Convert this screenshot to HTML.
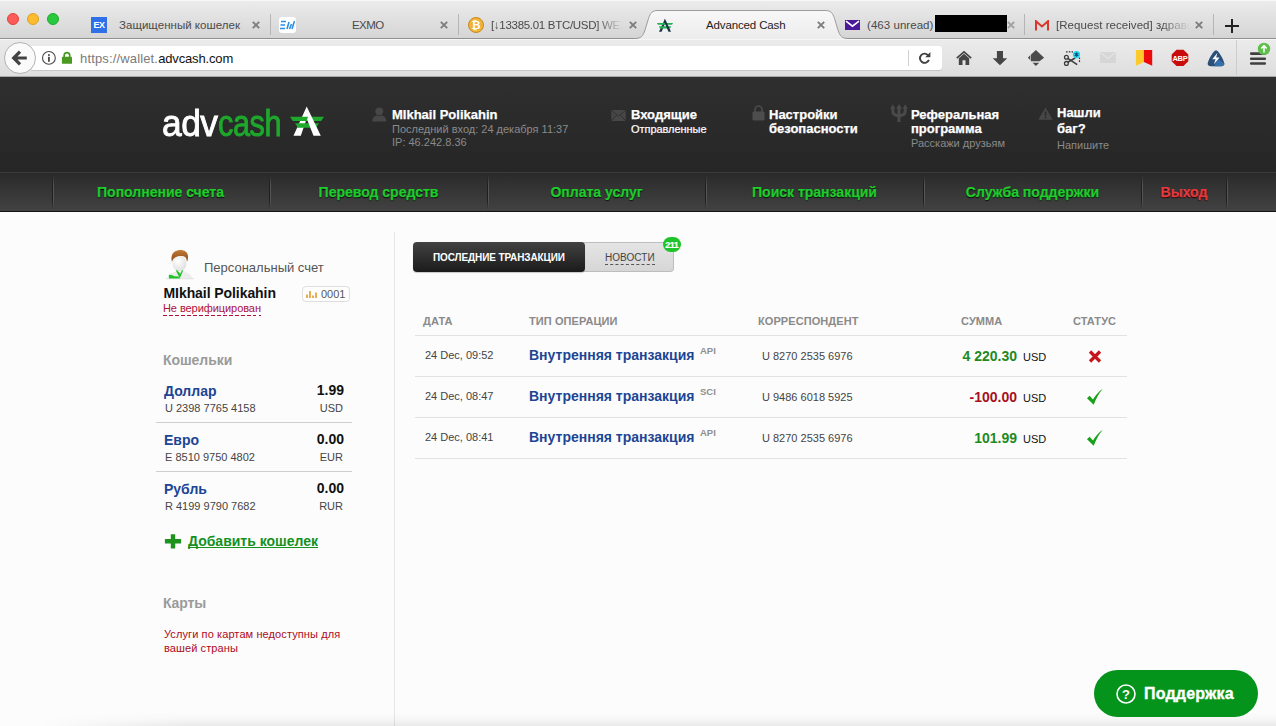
<!DOCTYPE html>
<html lang="ru">
<head>
<meta charset="utf-8">
<title>Advanced Cash</title>
<style>
*{box-sizing:border-box;margin:0;padding:0}
html,body{width:1276px;height:726px;overflow:hidden;background:#fcfcfc;font-family:"Liberation Sans",sans-serif;}
.a{position:absolute;white-space:nowrap}
#chrome{position:absolute;left:0;top:0;width:1276px;height:77px;background:#f1f1f1}
#tabbar{position:absolute;left:0;top:0;width:1276px;height:38px;background:linear-gradient(#f9f9f9 0,#f9f9f9 1px,#ebebeb 1.500px,#d5d5d5)}
#urlbar{position:absolute;left:0;top:39px;width:1276px;height:38px;background:linear-gradient(#ebebeb,#dedede);border-top:1px solid #f6f6f6;border-bottom:1px solid #a8a8a8}
.tl{position:absolute;top:13px;width:12px;height:12px;border-radius:6px}
.tab{position:absolute;top:0;height:38px;font-size:11.500px;white-space:nowrap;color:#4a4a4a;line-height:38px}
.tabx{position:absolute;top:0;font-size:11px;color:#808080;line-height:38px;font-weight:bold}
.sep{position:absolute;top:9px;width:1px;height:24px;background:#b5b5b5}
#field{position:absolute;left:30px;top:6px;width:912px;height:24px;background:#fff;border-radius:3px;box-shadow:0 1px 0 #c6c6c6}
#hdr{position:absolute;left:0;top:77px;width:1276px;height:95px;background:linear-gradient(#2f2f2f,#262626)}
#nav{position:absolute;left:0;top:172px;width:1276px;height:40px;background:linear-gradient(#2a2a2a,#424242);border-top:1px solid #3b3b3b;border-bottom:1px solid #141414}
.nv{position:absolute;top:0;height:38px;line-height:38px;font-size:14px;font-weight:bold;color:#20cb2c;text-align:center;text-shadow:0 1px 1px #000;-webkit-text-stroke:0.25px currentColor}
.nsep{position:absolute;top:2px;width:2px;height:35px;background:linear-gradient(90deg,#1e1e1e 50%,#555 50%);-webkit-mask-image:linear-gradient(transparent,#000 30%,#000 70%,transparent)}
.hb{color:#fff;font-weight:bold;font-size:13px;line-height:14px;-webkit-text-stroke:0.25px #fff}
.hs{color:#8a8a8a;font-size:11px;line-height:13px}
.th{font-size:11px;font-weight:bold;color:#8a8a8a;letter-spacing:0.08px}
.row{position:absolute;left:415px;width:712px;height:1px;background:#e2e2e2}
.dt{font-size:11px;color:#444}
.op{font-size:14px;font-weight:bold;color:#1c4594}
.sup{font-size:9.500px;font-weight:bold;color:#8f8f8f;line-height:10px}
.co{font-size:11px;color:#444}
.am{font-size:14px;font-weight:bold;text-align:right}
.cur{font-size:11px;color:#111}
.wn{font-size:14px;font-weight:bold;color:#1c4594}
.wa{font-size:11px;color:#444}
.wv{font-size:14px;font-weight:bold;color:#111;text-align:right}
.wc{font-size:11px;color:#444;text-align:right}
.wl{position:absolute;left:156px;width:196px;height:1px;background:#cfcfcf}
</style>
</head>
<body>
<div id="chrome">
 <div id="tabbar">
  <div class="tl" style="left:7px;background:#fc5b57;border:1px solid #de4340"></div>
  <div class="tl" style="left:27px;background:#fdbc2e;border:1px solid #dfa123"></div>
  <div class="tl" style="left:47px;background:#28c93f;border:1px solid #1dad2b"></div>
  <!-- tab 1 -->
  <div class="a" style="left:91px;top:17px;width:16px;height:16px;background:#2f6fe8;color:#fff;font-size:9px;font-weight:bold;line-height:16px;text-align:center;letter-spacing:-0.5px">EX</div>
  <div class="tab" style="left:119px;top:6px;letter-spacing:0.03px">Защищенный кошелек</div>
  <svg class="a" style="left:252px;top:21px" width="8" height="8" viewBox="0 0 8 8"><path d="M0.800 0.800L7.200 7.200M7.200 0.800L0.800 7.200" stroke="#7d7d7d" stroke-width="1.900"/></svg>
  <div class="sep" style="left:270px;top:14px;height:21px"></div>
  <!-- tab 2 -->
  <div class="a" style="left:279px;top:17px;width:17px;height:16px;background:#fff;border-radius:3px"></div>
  <svg class="a" style="left:280px;top:20px" width="15" height="10" viewBox="0 0 15 10"><path d="M1 1.5h5M0.5 5h4.5M0 8.5h5" stroke="#2b8fe6" stroke-width="1.4" fill="none"/><path d="M7 9l2-7M9.5 9l2-5M12 9l2.5-8" stroke="#2b8fe6" stroke-width="1.6" fill="none"/></svg>
  <div class="tab" style="left:352px;top:6px;letter-spacing:-0.55px">EXMO</div>
  <svg class="a" style="left:440px;top:21px" width="8" height="8" viewBox="0 0 8 8"><path d="M0.800 0.800L7.200 7.200M7.200 0.800L0.800 7.200" stroke="#7d7d7d" stroke-width="1.900"/></svg>
  <div class="sep" style="left:458px;top:14px;height:21px"></div>
  <!-- tab 3 -->
  <div class="a" style="left:468px;top:17px;width:16px;height:16px;border-radius:8px;background:#f0b33a;border:1px solid #c98a1c;color:#fff;font-size:11px;font-weight:bold;line-height:14px;text-align:center">₿</div>
  <div class="tab" style="left:491px;top:6px;letter-spacing:-0.3px;width:132px;overflow:hidden;-webkit-mask-image:linear-gradient(90deg,#000 80%,transparent)">[↓13385.01 BTC/USD] WEX</div>
  <svg class="a" style="left:629px;top:21px" width="8" height="8" viewBox="0 0 8 8"><path d="M0.800 0.800L7.200 7.200M7.200 0.800L0.800 7.200" stroke="#7d7d7d" stroke-width="1.900"/></svg>
  <!-- active tab -->
  <div class="a" style="left:0;top:38px;width:1276px;height:1px;background:#909090"></div>
  <svg class="a" style="left:635px;top:9px" width="213" height="30" viewBox="0 0 213 30"><defs><linearGradient id="tg" x1="0" y1="0" x2="0" y2="1"><stop offset="0" stop-color="#f8f8f8"/><stop offset="1" stop-color="#ececec"/></linearGradient></defs><path d="M0 29.500C6 29.500 8 27 10 21L13.500 9.500C15.500 3.500 17.500 1.500 23 1.500L190 1.500C195.500 1.500 197.500 3.500 199.500 9.500L203 21C205 27 207 29.500 213 29.500 L213 30 L0 30Z" fill="url(#tg)"/><path d="M0 29.500C6 29.500 8 27 10 21L13.500 9.500C15.500 3.500 17.500 1.500 23 1.500L190 1.500C195.500 1.500 197.500 3.500 199.500 9.500L203 21C205 27 207 29.500 213 29.500" fill="none" stroke="#9c9c9c" stroke-width="1"/></svg>
  <svg class="a" style="left:655px;top:17px" width="20" height="16" viewBox="655 17 20 16"><path d="M665 18.700L659 31.800H661.600L665 23.500Z" fill="#1b3345"/><path d="M656.900 22.900H673.100L672 24.800H658z M658.800 26.200H671.200L670 28.400H660z" fill="#23b055"/><path d="M665 18.700L671 31.800H668.500L664.200 21.500Z" fill="#1b3345"/></svg>
  <div class="tab" style="left:706px;top:6px;color:#222;letter-spacing:-0.13px">Advanced Cash</div>
  <svg class="a" style="left:817px;top:21px" width="8" height="8" viewBox="0 0 8 8"><path d="M0.800 0.800L7.200 7.200M7.200 0.800L0.800 7.200" stroke="#7d7d7d" stroke-width="1.900"/></svg>
  <!-- tab 5 -->
  <svg class="a" style="left:845px;top:20px" width="15" height="10" viewBox="0 0 15 10"><rect width="15" height="10" fill="#4a1a9a"/><path d="M1 1.200l6.500 5 6.500-5" stroke="#fff" stroke-width="1.600" fill="none"/></svg>
  <div class="tab" style="left:867px;top:6px;letter-spacing:0.05px">(463 unread)</div>
  <div class="a" style="left:935px;top:15px;width:72px;height:17px;background:#000"></div>
  <svg class="a" style="left:1006.5px;top:21px" width="8" height="8" viewBox="0 0 8 8"><path d="M0.800 0.800L7.200 7.200M7.200 0.800L0.800 7.200" stroke="#a0a0a0" stroke-width="1.900"/></svg>
  <div class="sep" style="left:1024px;top:14px;height:21px"></div>
  <!-- tab 6 -->
  <svg class="a" style="left:1035px;top:20px" width="14" height="11" viewBox="0 0 14 11"><path d="M1 10.500V1.200L7 6.500 13 1.200V10.500" stroke="#d9372b" stroke-width="2" fill="none"/></svg>
  <div class="tab" style="left:1056px;top:6px;letter-spacing:0.05px;width:134px;overflow:hidden;-webkit-mask-image:linear-gradient(90deg,#000 78%,transparent)">[Request received] здравствуйте</div>
  <svg class="a" style="left:1195px;top:21px" width="8" height="8" viewBox="0 0 8 8"><path d="M0.800 0.800L7.200 7.200M7.200 0.800L0.800 7.200" stroke="#7d7d7d" stroke-width="1.900"/></svg>
  <div class="sep" style="left:1213px;top:14px;height:21px"></div>
  <svg class="a" style="left:1224px;top:18px" width="16" height="16" viewBox="0 0 16 16"><path d="M8 1v14M1 8h14" stroke="#222" stroke-width="2"/></svg>
 </div>
 <div id="urlbar">
  <div id="field"></div>
  <div class="a" style="left:4px;top:2px;width:32px;height:32px;border-radius:16px;background:#fafafa;border:1px solid #b2b2b2"></div>
  <svg class="a" style="left:10px;top:8px" width="20" height="20" viewBox="10 48 20 20"><path d="M26.800 58H14.500M20 51.700L13.700 58 20 64.300" stroke="#424242" stroke-width="3.200" fill="none" stroke-linejoin="miter"/></svg>
  <svg class="a" style="left:40px;top:9px" width="18" height="18" viewBox="40 49 18 18"><circle cx="48.900" cy="57.900" r="6.400" fill="none" stroke="#4a4a4a" stroke-width="1.100"/><rect x="48" y="56.800" width="1.800" height="5" fill="#4a4a4a"/><rect x="48" y="54.200" width="1.800" height="1.700" fill="#4a4a4a"/></svg>
  <svg class="a" style="left:60px;top:10px" width="14" height="16" viewBox="60 50 14 16"><path d="M64.200 57.500V55.300a2.750 2.750 0 0 1 5.500 0V57.500" stroke="#4a9a22" stroke-width="1.700" fill="none"/><rect x="61.900" y="56.800" width="10.100" height="7" rx="0.600" fill="#4a9a22"/></svg>
  <div class="a" style="left:80px;top:11px;font-size:13px;line-height:16px;color:#7a7a7a;letter-spacing:0.15px">https://wallet.<span style="color:#111;letter-spacing:-0.15px">advcash.com</span></div>
  <div class="a" style="left:908px;top:10px;width:1px;height:16px;background:#d0d0d0"></div>
  <svg class="a" style="left:900px;top:-2px" width="376" height="39" viewBox="900 38 376 39">
   <!-- reload -->
   <path d="M928.300 55.500A4.600 4.600 0 1 0 928.900 59.800" stroke="#404040" stroke-width="1.900" fill="none"/><path d="M925.200 57.300H930.400V52.100z" fill="#404040"/>
   <!-- home -->
   <path d="M956.800 58.200L964 51.900 971.200 58.200" stroke="#454545" stroke-width="1.700" fill="none"/><path d="M958.800 58.200L964 53.700 969.200 58.200V64.900H965.500V60.300H962.500V64.900H958.800z" fill="#454545"/>
   <!-- download -->
   <path d="M996.900 51.100H1003V58.300H1007.200L999.950 65.300 992.700 58.300H996.900z" fill="#454545"/>
   <!-- dev icon -->
   <path d="M1035.900 49.900L1044.100 57.800 1039.500 61.300H1030.800V54.800z" fill="#4a4a4a"/><path d="M1027.900 57.700L1030.200 55.300V60.100z" fill="#4a4a4a"/><path d="M1032.600 62.700H1039.200L1035.900 65.900z" fill="#4a4a4a"/>
   <!-- scissors -->
   <path d="M1066 51.800H1073" stroke="#333" stroke-width="1.200" stroke-dasharray="1.600 1.200" fill="none"/><path d="M1079.500 57.500V62.500" stroke="#333" stroke-width="1.200" stroke-dasharray="1.600 1.200" fill="none"/>
   <circle cx="1066.400" cy="57.300" r="1.900" fill="none" stroke="#3d3d3d" stroke-width="1.300"/><circle cx="1066.400" cy="63.400" r="1.900" fill="none" stroke="#3d3d3d" stroke-width="1.300"/>
   <path d="M1067.800 58.400L1077.200 64.600M1067.800 62.300L1075.200 58" stroke="#3d3d3d" stroke-width="1.600" fill="none"/>
   <circle cx="1076.500" cy="54.600" r="3.600" fill="#1fd6ee"/><path d="M1076.500 52.500V56.700M1074.700 53.550L1078.300 55.650M1074.700 55.650L1078.300 53.550" stroke="#0b4f78" stroke-width="1.100"/>
   <!-- faded mail -->
   <rect x="1100" y="52" width="15.800" height="11" fill="#d6d6d6"/><path d="M1100.500 52.500L1107.900 58.500 1115.300 52.500" stroke="#e2e2e2" stroke-width="1.500" fill="none"/>
   <!-- bookmark -->
   <path d="M1135.900 50H1143.900V61.900L1135.900 65.800z" fill="#fdc92b"/><path d="M1143.900 50H1152.200V65.800L1143.900 61.900z" fill="#ec0a0a"/>
   <!-- abp -->
   <path d="M1176.500 49.700H1183.500L1188.300 54.500V61.300L1183.500 66.100H1176.500L1171.700 61.300V54.500z" fill="#c90b0b"/>
   <text x="1180" y="61" font-family="Liberation Sans, sans-serif" font-size="7.500" font-weight="bold" fill="#fff" text-anchor="middle" letter-spacing="-0.2">ABP</text>
   <!-- blue -->
   <path d="M1216 50.200C1218.500 50.200 1223.600 59.500 1224.300 63.500 1224.600 65.500 1222.800 66 1221.300 66.200H1210.700C1209.200 66 1207.400 65.500 1207.700 63.500 1208.400 59.500 1213.500 50.200 1216 50.200z" fill="#2a4f78"/><path d="M1216.500 58L1224.300 63.500C1224.600 65.500 1222.800 66 1221.300 66.200H1214.500z" fill="#3570a8"/><path d="M1217.300 53L1212.300 59.300H1215.600L1213.800 64.300 1219.600 57.600H1216.200z" fill="#fff"/>
   <!-- sep -->
   <rect x="1236" y="40" width="1" height="35" fill="#cdcdcd"/>
   <!-- hamburger -->
   <path d="M1251.200 53.600H1264.800M1251.200 58.700H1264.800M1251.200 63.500H1264.800" stroke="#404040" stroke-width="2.600" stroke-linecap="round"/>
   <circle cx="1264" cy="48.900" r="6.200" fill="#5fbf4b"/><path d="M1264 52.500V46M1261.300 48.400L1264 45.600 1266.700 48.400" stroke="#fff" stroke-width="1.500" fill="none"/>
  </svg>
 </div>
</div>
<div id="hdr">
 <div class="a" style="left:162px;top:27px;font-size:37px;line-height:40px;color:#fff;-webkit-text-stroke:0.9px #fff;transform-origin:0 0;transform:scaleX(0.955);letter-spacing:-0.5px">adv</div>
 <div class="a" style="left:218px;top:27px;font-size:37px;line-height:40px;color:#1ea82c;-webkit-text-stroke:0.9px #1ea82c;transform-origin:0 0;transform:scaleX(0.83);letter-spacing:-0.5px">cash</div>
 <svg class="a" style="left:289px;top:28px" width="36" height="32" viewBox="0 0 36 32"><path d="M1 11.800h34l-2.800 4.200H3.800z M6 18.200h24l-3 4.600H9z" fill="#1ea82c"/><path d="M17.700 1.500L4.500 30.800h7.300L17.700 13.500 24.500 30.800h7.300z" fill="#fff"/><path d="M12 11.800h7l-1.400 4.200h-7.200z M9.500 18.200h7.200l-1.600 4.600H7.800z" fill="#1ea82c"/></svg>
 <svg class="a" style="left:372px;top:29.500px" width="15" height="15" viewBox="0 0 15 15"><circle cx="7.300" cy="4.300" r="3.900" fill="#474747"/><path d="M0.300 14.500C0.300 10.500 2.500 9 5.500 8.300L7.300 9.200 9.100 8.300C12.100 9 14.300 10.500 14.300 14.500z" fill="#474747"/></svg>
 <div class="a hb" style="left:392px;top:30.500px">MIkhail Polikahin</div>
 <div class="a hs" style="left:392px;top:46px">Последний вход: 24 декабря 11:37</div>
 <div class="a hs" style="left:392px;top:59px">IP: 46.242.8.36</div>
 <svg class="a" style="left:611px;top:33px" width="15" height="11" viewBox="0 0 15 11"><rect x="0.300" width="14.400" height="11" rx="1" fill="#474747"/><path d="M0.600 0.600l6.900 5.400 6.900-5.400M0.600 10.400l4.700-4.900M14.400 10.400l-4.700-4.900" stroke="#2c2c2c" stroke-width="0.800" fill="none"/></svg>
 <div class="a hb" style="left:631px;top:30.500px">Входящие</div>
 <div class="a" style="left:631px;top:46px;font-size:11px;line-height:13px;color:#fff;letter-spacing:-0.05px;-webkit-text-stroke:0.2px #fff">Отправленные</div>
 <svg class="a" style="left:752px;top:28px" width="13" height="16" viewBox="0 0 13 16"><path d="M3 7V4.500a3.500 3.500 0 0 1 7 0V7" stroke="#4d4d4d" stroke-width="1.600" fill="none"/><rect x="0.500" y="6.500" width="12" height="9" rx="1" fill="#4d4d4d"/></svg>
 <div class="a hb" style="left:769px;top:30.500px">Настройки<br>безопасности</div>
 <svg class="a" style="left:890px;top:27px" width="18" height="18" viewBox="0 0 18 18"><rect x="7.500" y="2" width="3" height="16" fill="#4a4a4a"/><path d="M2.800 4V7C2.800 10.300 5 11.600 9 11.600 13 11.600 15.200 10.300 15.200 7V4" stroke="#4a4a4a" stroke-width="3" fill="none"/><path d="M0.200 4.800L2.800 0.300 5.400 4.800zM6.200 4.800L9 0 11.800 4.800zM12.600 4.800L15.200 0.300 17.800 4.800z" fill="#4a4a4a"/></svg>
 <div class="a hb" style="left:911px;top:30.500px">Реферальная<br>программа</div>
 <div class="a hs" style="left:911px;top:60px">Расскажи друзьям</div>
 <svg class="a" style="left:1038px;top:29.500px" width="15" height="13" viewBox="0 0 15 13"><path d="M7.500 0.500L14.700 12.700H0.300z" fill="#474747"/><rect x="6.700" y="4.500" width="1.600" height="4.200" fill="#2a2a2a"/><rect x="6.700" y="9.700" width="1.600" height="1.500" fill="#2a2a2a"/></svg>
 <div class="a hb" style="left:1057px;top:28px;line-height:16px">Нашли<br>баг?</div>
 <div class="a hs" style="left:1057px;top:62px">Напишите</div>
</div>
<div id="nav">
 <div class="nsep" style="left:52px"></div>
 <div class="nv" style="left:52px;width:217px">Пополнение счета</div>
 <div class="nsep" style="left:269px"></div>
 <div class="nv" style="left:270px;width:217px">Перевод средств</div>
 <div class="nsep" style="left:487px"></div>
 <div class="nv" style="left:488px;width:217px">Оплата услуг</div>
 <div class="nsep" style="left:705px"></div>
 <div class="nv" style="left:706px;width:217px">Поиск транзакций</div>
 <div class="nsep" style="left:923px"></div>
 <div class="nv" style="left:924px;width:217px">Служба поддержки</div>
 <div class="nsep" style="left:1141px"></div>
 <div class="nv" style="left:1142px;width:84px;color:#e8383d">Выход</div>
 <div class="nsep" style="left:1226px"></div>
</div>
<div id="main">
 <div class="a" style="left:394px;top:232px;width:1px;height:494px;background:#e6e6e6"></div>
 <!-- sidebar -->
 <svg class="a" style="left:160px;top:246px" width="40" height="36" viewBox="160 246 40 36"><defs><radialGradient id="fg" cx="0.4" cy="0.35" r="0.8"><stop offset="0" stop-color="#fff"/><stop offset="1" stop-color="#d9d9d9"/></radialGradient><linearGradient id="hg" x1="0" y1="0" x2="0" y2="1"><stop offset="0" stop-color="#c27a35"/><stop offset="1" stop-color="#8a4a18"/></linearGradient></defs><path d="M166.500 278.700h27" stroke="#cfcfcf" stroke-width="0.800"/><path d="M168 278.500C168 274.500 171.500 272.800 176 272L183.500 272C188 272.800 192 274.500 192 278.500Z" fill="#ececec"/><ellipse cx="179.400" cy="263.400" rx="7" ry="8" fill="url(#fg)"/><path d="M172 262C170.500 257 172 252.500 176 251 178.500 249.500 183 249.500 185.500 251.500 188.500 253.500 188.800 258 187 262 186.800 259 186 257 183.500 256.300 181 255.800 178 255.800 175.500 257.300 173.500 258.500 172.500 260 172 262Z" fill="url(#hg)"/><path d="M175.800 270.300L177.200 270.300 180.200 273.700 182 270.300 183.200 270.300 179.800 278.500Z M168.800 275C170.500 274.500 172.500 275 174.500 276.300L178.300 276.600 179.800 278.500 169 278.500Z" fill="#1fc32a"/></svg>
 <div class="a" style="left:204px;top:260px;font-size:13px;line-height:15px;color:#555">Персональный счет</div>
 <div class="a" style="left:163.500px;top:285px;font-size:14px;line-height:16px;font-weight:bold;color:#111;letter-spacing:-0.07px">MIkhail Polikahin</div>
 <div class="a" style="left:302px;top:286px;width:48px;height:16px;border:1px solid #dedede;border-radius:4px;background:#fefefe"></div>
 <svg class="a" style="left:306px;top:290px" width="11" height="8" viewBox="0 0 11 8"><path d="M1 8V4.500M4 8V1M7 8V5.500M10 8V2.500" stroke="#e09a2b" stroke-width="1.600"/></svg>
 <div class="a" style="left:321px;top:288px;font-size:11px;line-height:13px;color:#555">0001</div>
 <div class="a" style="left:163px;top:302px;font-size:11px;line-height:13px;color:#b0103a;padding-bottom:1px;background:repeating-linear-gradient(90deg,#b0103a 0 3.500px,transparent 3.500px 6px) 0 100%/100% 1px no-repeat;letter-spacing:-0.07px">Не верифицирован</div>
 <div class="a" style="left:163px;top:352px;font-size:14px;line-height:16px;font-weight:bold;color:#9a9a9a;letter-spacing:-0.05px">Кошельки</div>

 <div class="a wn" style="left:164px;top:383px">Доллар</div>
 <div class="a wv" style="left:284px;top:382px;width:60px">1.99</div>
 <div class="a wa" style="left:165px;top:402px">U 2398 7765 4158</div>
 <div class="a wc" style="left:283px;top:402px;width:60px">USD</div>
 <div class="wl" style="top:422px"></div>
 <div class="a wn" style="left:164px;top:432px">Евро</div>
 <div class="a wv" style="left:284px;top:431px;width:60px">0.00</div>
 <div class="a wa" style="left:165px;top:451px">E 8510 9750 4802</div>
 <div class="a wc" style="left:283px;top:451px;width:60px">EUR</div>
 <div class="wl" style="top:471px"></div>
 <div class="a wn" style="left:164px;top:481px">Рубль</div>
 <div class="a wv" style="left:284px;top:480px;width:60px">0.00</div>
 <div class="a wa" style="left:165px;top:500px">R 4199 9790 7682</div>
 <div class="a wc" style="left:283px;top:500px;width:60px">RUR</div>

 <svg class="a" style="left:164px;top:533px" width="18" height="16" viewBox="164 533 18 16"><path d="M173 534.200V548.400M164.900 541.300H181.100" stroke="#1d921d" stroke-width="4.400"/></svg>
 <div class="a" style="left:188px;top:533px;font-size:14px;line-height:16px;font-weight:bold;color:#14911f;text-decoration:underline;text-decoration-skip-ink:none;text-underline-offset:1px">Добавить кошелек</div>
 <div class="a" style="left:163px;top:595px;font-size:14px;line-height:16px;font-weight:bold;color:#9a9a9a;letter-spacing:-0.15px">Карты</div>
 <div class="a" style="left:164px;top:627px;font-size:11px;line-height:14px;color:#ad0a1c;letter-spacing:0.1px">Услуги по картам недоступны для<br>вашей страны</div>

 <!-- tabs -->
 <div class="a" style="left:580px;top:242px;width:94px;height:30px;background:linear-gradient(#e4e4e4,#d6d6d6);border:1px solid #bdbdbd;border-left:none;border-radius:0 4px 4px 0"></div>
 <div class="a" style="left:413px;top:242px;width:172px;height:30px;background:linear-gradient(#424242,#1b1b1b);border-radius:4px;box-shadow:0 1px 1px rgba(0,0,0,.2)"></div>
 <div class="a" style="left:433px;top:252px;font-size:10px;line-height:12px;font-weight:bold;color:#fff;letter-spacing:-0.12px">ПОСЛЕДНИЕ ТРАНЗАКЦИИ</div>
 <div class="a" style="left:605px;top:252px;font-size:10px;line-height:12px;color:#444;border-bottom:1px dashed #555;letter-spacing:0.05px">НОВОСТИ</div>
 <div class="a" style="left:663px;top:237px;width:18px;height:15px;border-radius:7.500px;background:#1fc32a;color:#fff;font-size:9px;font-weight:bold;line-height:17.500px;text-align:center;letter-spacing:-0.5px;text-indent:-0.5px;-webkit-text-stroke:0.2px #fff">211</div>

 <!-- table -->
 <div class="a th" style="left:423px;top:315px">ДАТА</div>
 <div class="a th" style="left:529px;top:315px">ТИП ОПЕРАЦИИ</div>
 <div class="a th" style="left:758px;top:315px">КОРРЕСПОНДЕНТ</div>
 <div class="a th" style="left:961px;top:315px">СУММА</div>
 <div class="a th" style="left:1073px;top:315px">СТАТУС</div>
 <div class="row" style="top:335px"></div>
 <div class="row" style="top:376px"></div>
 <div class="row" style="top:417px"></div>
 <div class="row" style="top:458px"></div>

 <div class="a dt" style="left:425px;top:349px">24 Dec, 09:52</div>
 <div class="a op" style="left:529px;top:347px">Внутренняя транзакция</div>
 <div class="a sup" style="left:700px;top:346px">API</div>
 <div class="a co" style="left:762px;top:350px">U 8270 2535 6976</div>
 <div class="a am" style="left:937px;top:348px;width:80px;color:#1f8a1f">4 220.30</div>
 <div class="a cur" style="left:1023px;top:351px">USD</div>
 <svg class="a" style="left:1088px;top:350px" width="14" height="13" viewBox="0 0 14 13"><path d="M2 1.500L12 11.500M12 1.500L2 11.500" stroke="#c4161c" stroke-width="3.200"/></svg>

 <div class="a dt" style="left:425px;top:390px">24 Dec, 08:47</div>
 <div class="a op" style="left:529px;top:388px">Внутренняя транзакция</div>
 <div class="a sup" style="left:700px;top:387px">SCI</div>
 <div class="a co" style="left:762px;top:391px">U 9486 6018 5925</div>
 <div class="a am" style="left:937px;top:389px;width:80px;color:#a8101e">-100.00</div>
 <div class="a cur" style="left:1023px;top:392px">USD</div>
 <svg class="a" style="left:1086px;top:388px" width="18" height="18" viewBox="0 0 18 18"><path d="M1 10.300L3.600 7.800 7 11.500C9.500 7.300 12.500 3.800 16.800 0.800 12.800 5.500 10.200 10.200 7.700 16.800z" fill="#18a018"/></svg>

 <div class="a dt" style="left:425px;top:431px">24 Dec, 08:41</div>
 <div class="a op" style="left:529px;top:429px">Внутренняя транзакция</div>
 <div class="a sup" style="left:700px;top:428px">API</div>
 <div class="a co" style="left:762px;top:432px">U 8270 2535 6976</div>
 <div class="a am" style="left:937px;top:430px;width:80px;color:#1f8a1f">101.99</div>
 <div class="a cur" style="left:1023px;top:433px">USD</div>
 <svg class="a" style="left:1086px;top:429px" width="18" height="18" viewBox="0 0 18 18"><path d="M1 10.300L3.600 7.800 7 11.500C9.500 7.300 12.500 3.800 16.800 0.800 12.800 5.500 10.200 10.200 7.700 16.800z" fill="#18a018"/></svg>

 <!-- bottom shadow -->
 <div class="a" style="left:0;top:712px;width:1276px;height:14px;background:linear-gradient(rgba(0,0,0,0),rgba(0,0,0,.02) 50%,rgba(0,0,0,.075));-webkit-mask-image:linear-gradient(90deg,transparent 40px,#000 190px)"></div>
 <!-- support -->
 <div class="a" style="left:1094px;top:670px;width:164px;height:47px;border-radius:24px;background:#04941c"></div>
 <svg class="a" style="left:1115px;top:683px" width="22" height="22" viewBox="0 0 22 22"><circle cx="11" cy="11" r="9" fill="none" stroke="#fff" stroke-width="1.600"/><text x="11" y="15.500" font-family="Liberation Sans, sans-serif" font-size="13" font-weight="bold" fill="#fff" text-anchor="middle">?</text></svg>
 <div class="a" style="left:1144px;top:685px;font-size:16px;line-height:18px;font-weight:bold;color:#fff;letter-spacing:0.2px;-webkit-text-stroke:0.35px #fff">Поддержка</div>
</div>
</body>
</html>
